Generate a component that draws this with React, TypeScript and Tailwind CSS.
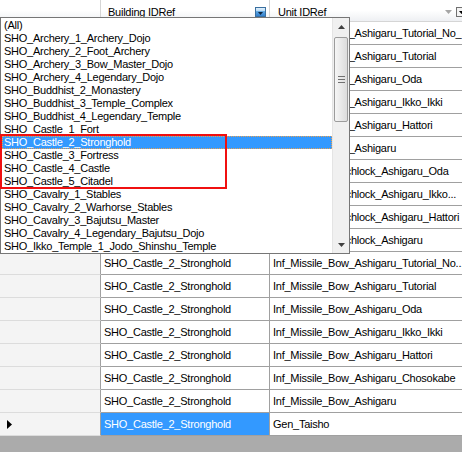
import React from "react";

const listItems = [
  "(All)",
  "SHO_Archery_1_Archery_Dojo",
  "SHO_Archery_2_Foot_Archery",
  "SHO_Archery_3_Bow_Master_Dojo",
  "SHO_Archery_4_Legendary_Dojo",
  "SHO_Buddhist_2_Monastery",
  "SHO_Buddhist_3_Temple_Complex",
  "SHO_Buddhist_4_Legendary_Temple",
  "SHO_Castle_1_Fort",
  "SHO_Castle_2_Stronghold",
  "SHO_Castle_3_Fortress",
  "SHO_Castle_4_Castle",
  "SHO_Castle_5_Citadel",
  "SHO_Cavalry_1_Stables",
  "SHO_Cavalry_2_Warhorse_Stables",
  "SHO_Cavalry_3_Bajutsu_Master",
  "SHO_Cavalry_4_Legendary_Bajutsu_Dojo",
  "SHO_Ikko_Temple_1_Jodo_Shinshu_Temple",
];

const units = [
  "Inf_Missile_Bow_Ashigaru_Tutorial_No_...",
  "Inf_Missile_Bow_Ashigaru_Tutorial",
  "Inf_Missile_Bow_Ashigaru_Oda",
  "Inf_Missile_Bow_Ashigaru_Ikko_Ikki",
  "Inf_Missile_Bow_Ashigaru_Hattori",
  "Inf_Missile_Bow_Ashigaru",
  "Inf_Missile_Matchlock_Ashigaru_Oda",
  "Inf_Missile_Matchlock_Ashigaru_Ikko...",
  "Inf_Missile_Matchlock_Ashigaru_Hattori",
  "Inf_Missile_Matchlock_Ashigaru",
  "Inf_Missile_Bow_Ashigaru_Tutorial_No...",
  "Inf_Missile_Bow_Ashigaru_Tutorial",
  "Inf_Missile_Bow_Ashigaru_Oda",
  "Inf_Missile_Bow_Ashigaru_Ikko_Ikki",
  "Inf_Missile_Bow_Ashigaru_Hattori",
  "Inf_Missile_Bow_Ashigaru_Chosokabe",
  "Inf_Missile_Bow_Ashigaru",
  "Gen_Taisho",
];

function FilterActive() {
  return (
    <svg width="11" height="10" viewBox="0 0 11 10" className="shrink-0">
      <defs>
        <linearGradient id="fbActive" x1="0" y1="0" x2="0" y2="1">
          <stop offset="0" stopColor="#e9f4fd" />
          <stop offset="0.4" stopColor="#b5d9f5" />
          <stop offset="0.45" stopColor="#5aa3e0" />
          <stop offset="1" stopColor="#2e7ccc" />
        </linearGradient>
      </defs>
      <rect x="0.5" y="0.5" width="10" height="9" fill="url(#fbActive)" stroke="#3a6f9f" />
      <path d="M3 5h5l-2.5 3z" fill="#0d2440" />
    </svg>
  );
}

function FilterBox() {
  return (
    <svg width="11" height="10" viewBox="0 0 11 10" className="shrink-0">
      <rect x="0.5" y="0.5" width="10" height="9" fill="#f4f4f4" stroke="#707070" />
      <path d="M3 4h5l-2.5 3z" fill="#000" />
    </svg>
  );
}

export default function App() {
  return (
    <div className="relative w-[462px] h-[452px] overflow-hidden bg-white font-['Liberation_Sans',Arial,sans-serif] text-[11px] tracking-[-0.25px] text-black">
      <div className="flex flex-col h-full">
        {/* Column headers */}
        <div className="flex h-[22px] shrink-0 bg-gradient-to-b from-white via-white to-[#eef0f3] border-b border-[#d5d5d5]">
          <div className="w-[101px] shrink-0 border-r border-[#d5d5d5]" />
          <div className="w-[169px] shrink-0 border-r border-[#d5d5d5] flex items-center pl-[7px] pr-[3px] pt-[3px]">
            <span className="flex-1 whitespace-nowrap">Building IDRef</span>
            <FilterActive />
          </div>
          <div className="w-[200px] shrink-0 flex items-center pl-[8px] pr-[3px] pt-[3px]">
            <span className="flex-1 whitespace-nowrap">Unit IDRef</span>
            <svg width="7" height="5" viewBox="0 0 7 5" className="shrink-0 mr-[4px]">
              <path d="M0 0h7l-3.5 4z" fill="#a6a6a6" />
            </svg>
            <FilterBox />
          </div>
        </div>

        {/* Rows */}
        {units.map((u, i) => {
          const selected = i === units.length - 1;
          return (
            <div key={i} className="flex h-[23px] shrink-0">
              <div className="w-[101px] shrink-0 bg-[#f4f4f4] border-r border-r-[#a0a0a0] border-b border-b-[#dcdcdc] flex items-center pl-[7px]">
                {selected && (
                  <svg width="6" height="9" viewBox="0 0 6 9">
                    <path d="M0 0l5 4.5L0 9z" fill="#000" />
                  </svg>
                )}
              </div>
              <div
                className={`w-[169px] shrink-0 border-r border-b border-[#a0a0a0] flex items-center pl-[3px] whitespace-nowrap overflow-hidden ${
                  selected ? "bg-[#3399ff] text-white" : "bg-white"
                }`}
              >
                SHO_Castle_2_Stronghold
              </div>
              <div className="w-[200px] shrink-0 border-b border-[#a0a0a0] flex items-center pl-[3px] whitespace-nowrap overflow-hidden bg-white">
                {u}
              </div>
            </div>
          );
        })}
        <div className="flex-1 bg-[#ababab]" />
      </div>

      {/* Filter dropdown list */}
      <div className="absolute left-0 top-[17px] w-[350px] h-[237px] border border-[#767676] bg-white flex overflow-hidden">
        <div className="flex-1 pt-[1px] overflow-hidden">
          {listItems.map((t, i) => (
            <div
              key={i}
              className={`h-[13px] leading-[13px] whitespace-nowrap ${
                i === 9
                  ? "bg-[#3399ff] text-white ml-[1px] pl-[2px] outline-1 outline-dotted outline-[#e8a050] -outline-offset-1"
                  : "pl-[3px]"
              }`}
            >
              {t}
            </div>
          ))}
        </div>
        {/* Scrollbar */}
        <div className="w-[17px] shrink-0 bg-[#f0f0f0] border-l border-[#e4e4e4] flex flex-col">
          <div className="h-[17px] shrink-0 flex items-center justify-center">
            <svg width="7" height="4" viewBox="0 0 7 4">
              <path d="M0 4l3.5-4L7 4z" fill="#404040" />
            </svg>
          </div>
          <div className="mt-[2px] ml-[1px] w-[14px] h-[85px] shrink-0 rounded-[2px] border border-[#9c9c9c] bg-gradient-to-r from-[#f6f6f6] to-[#dcdcdc] flex flex-col items-center justify-center gap-[2px]">
            <div className="w-[7px] h-px bg-[#707070]" />
            <div className="w-[7px] h-px bg-[#707070]" />
            <div className="w-[7px] h-px bg-[#707070]" />
          </div>
          <div className="flex-1" />
          <div className="h-[17px] shrink-0 flex items-center justify-center">
            <svg width="7" height="4" viewBox="0 0 7 4">
              <path d="M0 0h7L3.5 4z" fill="#404040" />
            </svg>
          </div>
        </div>
      </div>

      {/* Red annotation rectangle */}
      <div className="absolute left-0 top-[134px] w-[227px] h-[55px] border-2 border-[#f01010]" />
    </div>
  );
}
